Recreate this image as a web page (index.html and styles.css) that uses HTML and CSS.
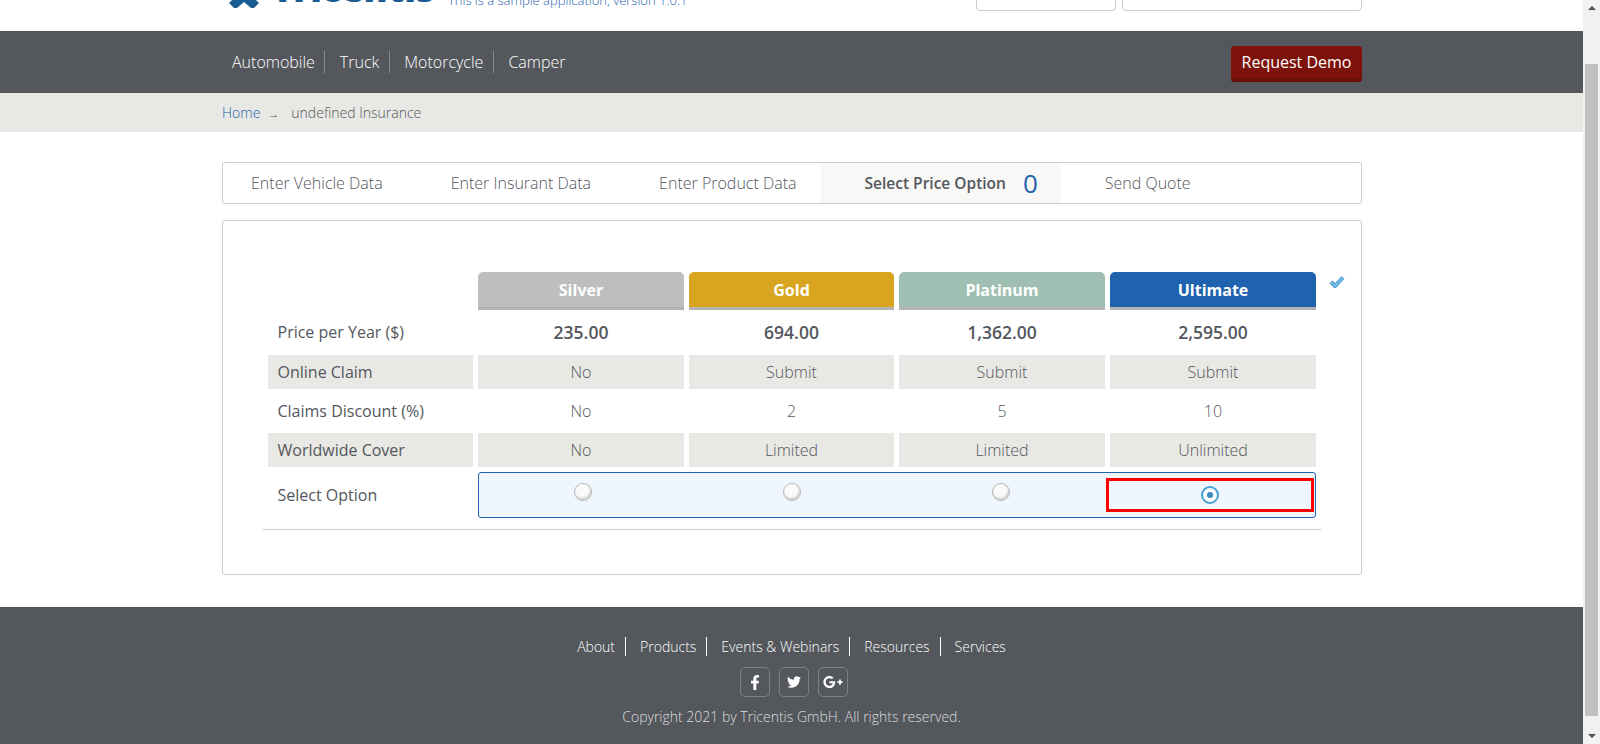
FILE: index.html
```html
<!DOCTYPE html>
<html>
	<head>
		<meta charset="utf-8" />
		<title>Tricentis Vehicle Insurance</title>
		<link rel="stylesheet" href="styles.css">
	</head>
	<body>
		<div class="page">
			<header class="top">
				<div class="wrap top_row">
					<svg class="logo_icon" viewBox="0 0 30 8"><path d="M0 3 L3 0 L27 0 L30 3 L25 8 L22 8 L15 2 L8 8 L5 8 Z" fill="#1b5c92"/></svg>
					<span class="logo_text">Tricentis</span>
					<span class="tagline">This is a sample application, version 1.0.1</span>
					<div class="top_boxes">
						<div class="top_box top_box_small"></div>
						<div class="top_box top_box_large"></div>
					</div>
				</div>
			</header>

			<nav class="nav">
				<div class="wrap nav_row">
					<ul class="nav_list">
						<li><a>Automobile</a></li>
						<li><a>Truck</a></li>
						<li><a>Motorcycle</a></li>
						<li><a>Camper</a></li>
					</ul>
					<a class="demo_button">Request Demo</a>
				</div>
			</nav>

			<div class="breadcrumb">
				<div class="wrap crumb_row">
					<a class="crumb_home">Home</a>
					<span class="crumb_arrow">&rarr;</span>
					<span class="crumb_current">undefined Insurance</span>
				</div>
			</div>

			<main class="wrap content">
				<ul class="steps">
					<li>Enter Vehicle Data</li>
					<li>Enter Insurant Data</li>
					<li>Enter Product Data</li>
					<li class="step_active">Select Price Option<span class="step_count">0</span></li>
					<li>Send Quote</li>
				</ul>

				<section class="panel">
					<div class="price_grid">
						<div class="spacer"></div>
						<div class="plan plan_silver">Silver</div>
						<div class="plan plan_gold">Gold</div>
						<div class="plan plan_platinum">Platinum</div>
						<div class="plan plan_ultimate">Ultimate</div>
						<div class="check_cell">
							<svg class="check_icon" viewBox="0 0 16 13">
								<path d="M2 7 L6 11 L14 2.500" fill="none" stroke="#3f93c8" stroke-width="4"/>
								<path d="M2 7 L6 11 L14 2.500" fill="none" stroke="#74c0ea" stroke-width="2"/>
							</svg>
						</div>

						<div class="label row_price">Price per Year ($)</div>
						<div class="price row_price">235.00</div>
						<div class="price row_price">694.00</div>
						<div class="price row_price">1,362.00</div>
						<div class="price row_price">2,595.00</div>

						<div class="label shaded">Online Claim</div>
						<div class="value shaded">No</div>
						<div class="value shaded">Submit</div>
						<div class="value shaded">Submit</div>
						<div class="value shaded">Submit</div>

						<div class="label">Claims Discount (%)</div>
						<div class="value">No</div>
						<div class="value">2</div>
						<div class="value">5</div>
						<div class="value">10</div>

						<div class="label shaded">Worldwide Cover</div>
						<div class="value shaded">No</div>
						<div class="value shaded">Limited</div>
						<div class="value shaded">Limited</div>
						<div class="value shaded">Unlimited</div>

						<div class="label">Select Option</div>
						<div class="options">
							<div class="option"><span class="radio"></span></div>
							<div class="option"><span class="radio"></span></div>
							<div class="option"><span class="radio"></span></div>
							<div class="option option_selected"><span class="radio radio_on"></span></div>
						</div>
					</div>
					<hr class="panel_rule">
				</section>
			</main>

			<footer class="footer">
				<ul class="footer_links">
					<li><a>About</a></li>
					<li><a>Products</a></li>
					<li><a>Events &amp; Webinars</a></li>
					<li><a>Resources</a></li>
					<li><a>Services</a></li>
				</ul>
				<div class="social">
					<a class="social_btn"><svg width="10" height="15" viewBox="0 0 320 512"><path fill="#fff" d="M279.14 288l14.22-92.66h-88.91v-60.13c0-25.35 12.42-50.06 52.24-50.06h40.42V6.26S260.43 0 225.36 0c-73.22 0-121.08 44.38-121.08 124.72v70.62H22.89V288h81.39v224h100.17V288z"/></svg></a>
					<a class="social_btn"><svg width="14" height="14" viewBox="0 0 512 512"><path fill="#fff" d="M459.37 151.716c.325 4.548.325 9.097.325 13.645 0 138.72-105.583 298.558-298.558 298.558-59.452 0-114.68-17.219-161.137-47.106 8.447.974 16.568 1.299 25.34 1.299 49.055 0 94.213-16.568 130.274-44.832-46.132-.975-84.792-31.188-98.112-72.772 6.498.974 12.995 1.624 19.818 1.624 9.421 0 18.843-1.3 27.614-3.573-48.081-9.747-84.143-51.98-84.143-102.985v-1.299c13.969 7.797 30.214 12.67 47.431 13.319-28.264-18.843-46.781-51.005-46.781-87.391 0-19.492 5.197-37.36 14.294-52.954 51.655 63.675 129.3 105.258 216.365 109.807-1.624-7.797-2.599-15.918-2.599-24.04 0-57.828 46.782-104.934 104.934-104.934 30.213 0 57.502 12.67 76.67 33.137 23.715-4.548 46.456-13.32 66.599-25.34-7.798 24.366-24.366 44.833-46.132 57.827 21.117-2.273 41.584-8.122 60.426-16.243-14.292 20.791-32.161 39.308-52.628 54.253z"/></svg></a>
					<a class="social_btn"><svg width="20" height="16" viewBox="0 0 640 512"><path fill="#fff" d="M386.061 228.496c1.834 9.692 3.143 19.384 3.143 31.956C389.204 370.205 315.599 448 204.8 448c-106.084 0-192-85.915-192-192s85.916-192 192-192c51.864 0 95.083 18.859 128.611 50.292l-52.126 50.03c-14.145-13.621-39.028-29.599-76.485-29.599-65.484 0-118.92 54.221-118.92 121.277 0 67.056 53.436 121.277 118.92 121.277 75.961 0 104.513-54.745 108.965-82.773H204.8v-66.009h181.261zm185.406 6.437V179.2h-56.001v55.733h-55.733v56.001h55.733v55.733h56.001v-55.733H627.2v-56.001h-55.733z"/></svg></a>
				</div>
				<p class="copyright">Copyright 2021 by Tricentis GmbH. All rights reserved.</p>
			</footer>
		</div>

		<div class="scrollbar">
			<span class="scroll_up"></span>
			<div class="scroll_thumb"></div>
			<span class="scroll_down"></span>
		</div>
	</body>
</html>
```

FILE: styles.css
```css
* {
	box-sizing: border-box;
}

body {
	margin: 0;
	height: 744px;
	overflow: hidden;
	display: flex;
	font-family: "Open Sans", "Liberation Sans", sans-serif;
	font-size: 14px;
	color: #54575c;
	background-color: #fff;
}

ul {
	list-style: none;
	margin: 0;
	padding: 0;
}

.page {
	flex: 1;
	min-width: 0;
	display: flex;
	flex-direction: column;
}

.wrap {
	width: 1140px;
	margin-left: 222px;
}

/* top, cut off by the scroll position */
.top {
	height: 31px;
	overflow: hidden;
}

.top_row {
	height: 31px;
	display: flex;
	align-items: flex-end;
}

.logo_icon {
	width: 30px;
	height: 8px;
	margin-left: 7px;
	margin-bottom: 23px;
	flex: none;
}

.logo_text {
	width: 172px;
	padding-left: 13px;
	font-size: 36px;
	font-weight: 800;
	line-height: 40px;
	color: #1b5c92;
	margin-bottom: 22px;
	flex: none;
}

.tagline {
	font-size: 13px;
	font-weight: 300;
	line-height: 18px;
	color: #1f62ae;
	margin-left: 17px;
	margin-bottom: 22px;
}

.top_boxes {
	margin-left: auto;
	display: flex;
	gap: 6px;
	margin-bottom: 20px;
}

.top_box {
	height: 30px;
	border: 1px solid #ccc;
	border-radius: 4px;
}

.top_box_small {
	width: 140px;
}

.top_box_large {
	width: 240px;
}

/* nav */
.nav {
	height: 62px;
	background-color: #54575c;
}

.nav_row {
	height: 62px;
	display: flex;
	align-items: center;
	justify-content: space-between;
}

.nav_list {
	display: flex;
	padding-left: 10px;
}

.nav_list li {
	height: 22px;
	line-height: 22px;
	font-size: 16px;
	font-weight: 300;
	color: #fff;
	padding-right: 10px;
	margin-right: 14px;
	border-right: 1px solid #8a8c90;
}

.nav_list li:first-child {
	padding-right: 9px;
	margin-right: 15px;
}

.nav_list li:last-child {
	border-right: none;
}

.demo_button {
	width: 131px;
	height: 36px;
	margin-top: 3px;
	line-height: 32px;
	text-align: center;
	font-size: 16px;
	color: #fff;
	background-color: #7c120a;
	border-bottom: 4px solid #6a0e08;
	border-radius: 3px;
}

/* breadcrumb */
.breadcrumb {
	height: 39px;
	background-color: #e8e8e4;
}

.crumb_row {
	height: 39px;
	display: flex;
	align-items: center;
	font-size: 14px;
	font-weight: 300;
}

.crumb_home {
	color: #1f62ae;
}

.crumb_arrow {
	font-size: 11px;
	margin: 2px 12px 0 8px;
}

/* steps */
.content {
	padding-top: 30px;
	flex: 1;
}

.steps {
	height: 42px;
	display: flex;
	border: 1px solid #ccc;
	border-radius: 3px;
	font-size: 16px;
	font-weight: 300;
}

.steps li {
	display: flex;
	align-items: center;
	padding: 0 24px 0 44px;
}

.steps li:first-child {
	padding-left: 28px;
}

.steps .step_active {
	font-size: 15.5px;
	font-weight: 600;
	padding-right: 23px;
	background-color: #f8f8f6;
}

.step_count {
	font-size: 26px;
	font-weight: 400;
	color: #1f62ae;
	margin-left: 17px;
}

/* price table */
.panel {
	margin-top: 16px;
	height: 355px;
	border: 1px solid #ccc;
	border-radius: 3px;
	padding: 51px 40px 0;
}

.price_grid {
	display: grid;
	grid-template-columns: 205px 206px 205px 206px 206px 30px;
	grid-template-rows: 38px 35px 34px 34px 34px 46px;
	gap: 5px;
	margin-left: 5px;
}

.plan {
	display: flex;
	align-items: center;
	justify-content: center;
	font-size: 16px;
	font-weight: 700;
	color: #fff;
	border-bottom: 3px solid #b3b3b3;
	border-radius: 5px 5px 0 0;
}

.plan_silver {
	background-color: #bebebe;
}

.plan_gold {
	background-color: #d9a520;
}

.plan_platinum {
	background-color: #a0bfb3;
}

.plan_ultimate {
	background-color: #1f62ae;
}

.check_cell {
	padding-left: 8px;
	padding-top: 3px;
}

.check_icon {
	width: 16px;
	height: 13px;
	display: block;
}

.label {
	grid-column: 1;
	display: flex;
	align-items: center;
	padding-left: 9.500px;
	font-size: 16px;
}

.value,
.price {
	display: flex;
	align-items: center;
	justify-content: center;
	font-size: 16px;
	font-weight: 300;
}

.price {
	font-size: 17.5px;
	font-weight: 600;
}

.row_price {
	padding-bottom: 2px;
}

.shaded {
	background-color: #e8e8e4;
}

.options {
	grid-column: 2 / span 4;
	display: grid;
	grid-template-columns: repeat(4, 1fr);
	background-color: #eff6fd;
	border: 1px solid #1f62ae;
	border-radius: 3px;
}

.option {
	display: flex;
	justify-content: center;
	padding: 10px 2px 0 0;
}

.option_selected {
	height: 34px;
	margin: 5px 1px 0 0;
	padding: 0;
	align-items: center;
	border: 3px solid #f00;
}

.radio {
	width: 18px;
	height: 18px;
	border: 1px solid #b5b5b5;
	border-radius: 50%;
	background-color: #fafafa;
	box-shadow: inset -1px -2px 2px #d0d0d0;
}

.radio_on {
	border: 2px solid #4a9fd4;
	background-color: #fafcfe;
	box-shadow: none;
	display: flex;
	align-items: center;
	justify-content: center;
}

.radio_on::after {
	content: "";
	width: 6px;
	height: 6px;
	border-radius: 50%;
	background-color: #3a87b8;
}

.panel_rule {
	margin: 11px 0 0;
	border: none;
	border-top: 1px solid #ccc;
}

/* footer */
.footer {
	height: 137px;
	background-color: #54575c;
	color: #fff;
	display: flex;
	flex-direction: column;
	align-items: center;
	padding-top: 30px;
}

.footer_links {
	display: flex;
	height: 19px;
	font-size: 14px;
	font-weight: 300;
}

.footer_links li {
	line-height: 19px;
	padding-right: 10px;
	margin-right: 14px;
	border-right: 1px solid #fff;
}

.footer_links li:last-child {
	border-right: none;
	padding-right: 0;
	margin-right: 0;
}

.social {
	display: flex;
	gap: 9px;
	margin-top: 11px;
	margin-left: 4px;
}

.social_btn {
	width: 30px;
	height: 30px;
	border: 1px solid #7d8084;
	border-radius: 5px;
	display: flex;
	align-items: center;
	justify-content: center;
}

.copyright {
	margin: 10px 0 0;
	font-size: 14px;
	font-weight: 300;
	line-height: 20px;
	color: #ddd;
}

/* scrollbar */
.scrollbar {
	width: 17px;
	height: 744px;
	background-color: #f1f1f1;
	display: flex;
	flex-direction: column;
	align-items: center;
	position: relative;
}

.scroll_thumb {
	width: 13px;
	height: 652px;
	margin-top: 64px;
	background-color: #c0c0c0;
}

.scroll_up,
.scroll_down {
	position: absolute;
	width: 0;
	height: 0;
	border-left: 4px solid transparent;
	border-right: 4px solid transparent;
}

.scroll_up {
	top: 6px;
	border-bottom: 4px solid #505050;
}

.scroll_down {
	bottom: 6px;
	border-top: 4px solid #505050;
}
```
